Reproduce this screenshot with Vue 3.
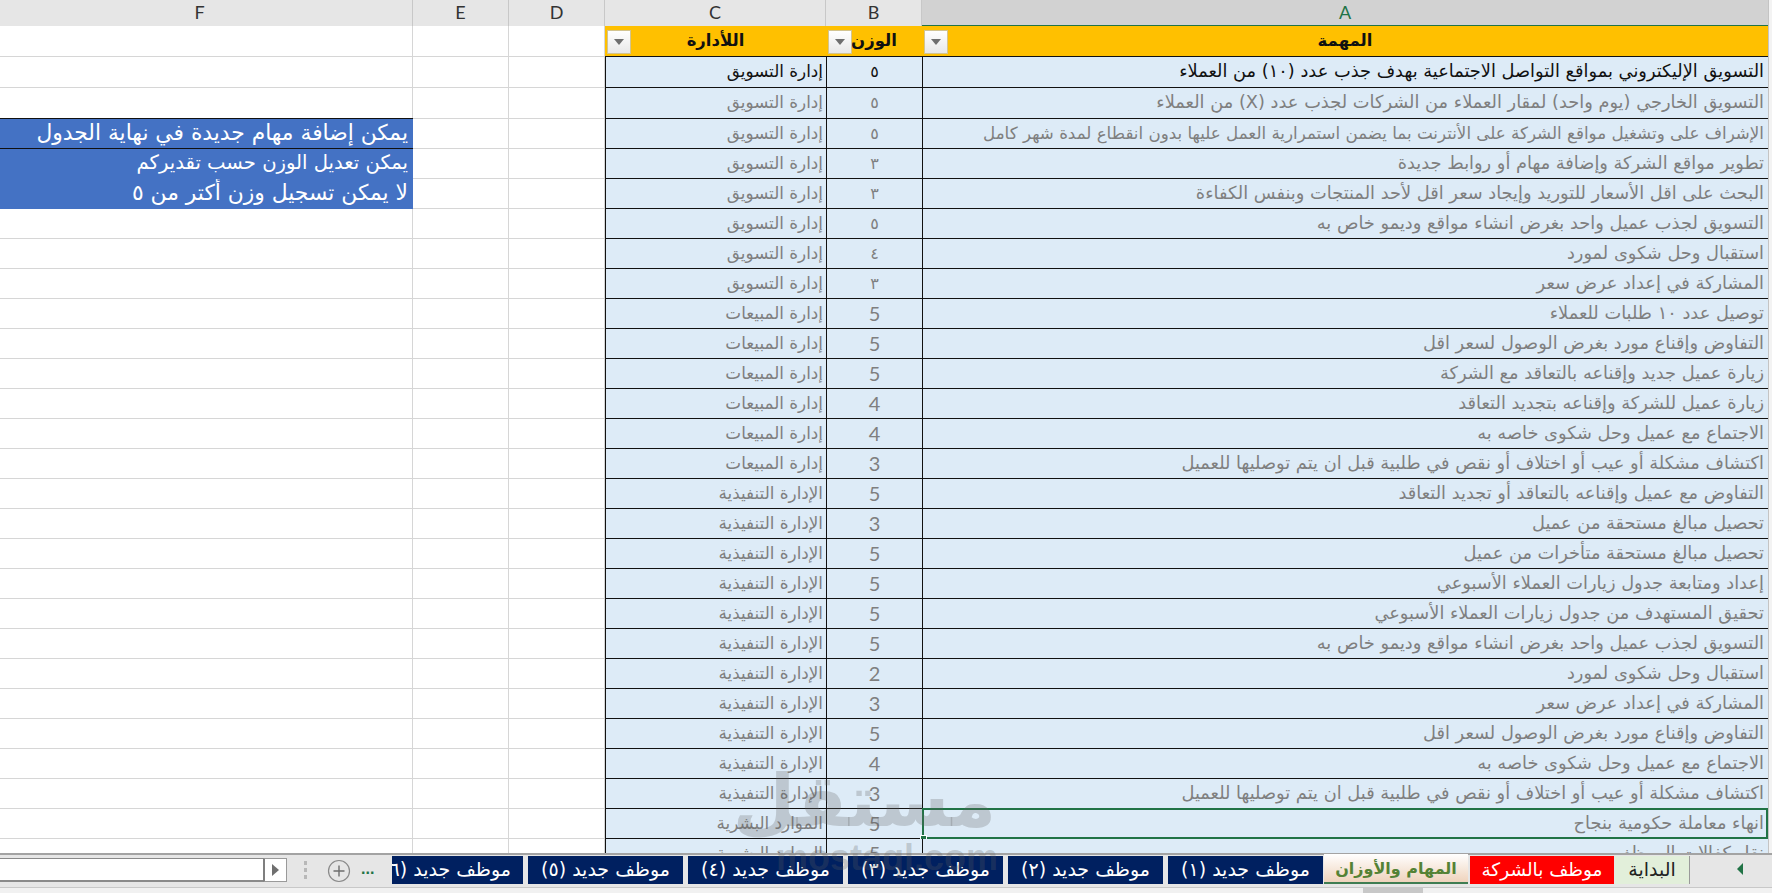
<script setup>
const mkt = 'إدارة التسويق'
const sales = 'إدارة المبيعات'
const exec = 'الإدارة التنفيذية'
const hr = 'الموارد البشرية'

const rows = [
  ['التسويق الإليكتروني بمواقع التواصل الاجتماعية بهدف جذب عدد (١٠) من العملاء', '٥', mkt],
  ['التسويق الخارجي (يوم واحد) لمقار العملاء من الشركات لجذب عدد (X) من العملاء', '٥', mkt],
  ['الإشراف على وتشغيل مواقع الشركة على الأنترنت بما يضمن استمرارية العمل عليها بدون انقطاع لمدة شهر كامل', '٥', mkt],
  ['تطوير مواقع الشركة وإضافة مهام أو روابط جديدة', '٣', mkt],
  ['البحث على اقل الأسعار للتوريد وإيجاد سعر اقل لأحد المنتجات وبنفس الكفاءة', '٣', mkt],
  ['التسويق لجذب عميل واحد بغرض انشاء مواقع وديمو خاص به', '٥', mkt],
  ['استقبال وحل شكوى لمورد', '٤', mkt],
  ['المشاركة في إعداد عرض سعر', '٣', mkt],
  ['توصيل عدد ١٠ طلبات للعملاء', '5', sales],
  ['التفاوض وإقناع مورد بغرض الوصول لسعر اقل', '5', sales],
  ['زيارة عميل جديد وإقناعه بالتعاقد مع الشركة', '5', sales],
  ['زيارة عميل للشركة وإقناعه بتجديد التعاقد', '4', sales],
  ['الاجتماع مع عميل وحل شكوى خاصه به', '4', sales],
  ['اكتشاف مشكلة أو عيب أو اختلاف أو نقص في طلبية قبل ان يتم توصليها للعميل', '3', sales],
  ['التفاوض مع عميل وإقناعه بالتعاقد أو تجديد التعاقد', '5', exec],
  ['تحصيل مبالغ مستحقة من عميل', '3', exec],
  ['تحصيل مبالغ مستحقة متأخرات من عميل', '5', exec],
  ['إعداد ومتابعة جدول زيارات العملاء الأسبوعي', '5', exec],
  ['تحقيق المستهدف من جدول زيارات العملاء الأسبوعي', '5', exec],
  ['التسويق لجذب عميل واحد بغرض انشاء مواقع وديمو خاص به', '5', exec],
  ['استقبال وحل شكوى لمورد', '2', exec],
  ['المشاركة في إعداد عرض سعر', '3', exec],
  ['التفاوض وإقناع مورد بغرض الوصول لسعر اقل', '5', exec],
  ['الاجتماع مع عميل وحل شكوى خاصه به', '4', exec],
  ['اكتشاف مشكلة أو عيب أو اختلاف أو نقص في طلبية قبل ان يتم توصليها للعميل', '3', exec],
  ['انهاء معاملة حكومية بنجاح', '5', hr],
  ['نقل كفالات الموظف', '5', hr]
]

// الملاحظات في العمود F
const notes = {
  2: 'يمكن إضافة مهام جديدة في نهاية الجدول',
  3: 'يمكن تعديل الوزن حسب تقديركم',
  4: 'لا يمكن تسجيل وزن أكتر من ٥'
}

const isArabicDigit = (d) => /[٠-٩]/.test(d)

const tabs = [
  { name: 'موظف جديد (٦)', cls: 'navy clipped' },
  { name: 'موظف جديد (٥)', cls: 'navy' },
  { name: 'موظف جديد (٤)', cls: 'navy' },
  { name: 'موظف جديد (٣)', cls: 'navy' },
  { name: 'موظف جديد (٢)', cls: 'navy' },
  { name: 'موظف جديد (١)', cls: 'navy' },
  { name: 'المهام والأوزان', cls: 'active' },
  { name: 'موظف بالشركة', cls: 'red' },
  { name: 'البداية', cls: 'start' }
]
</script>

<template>
  <div class="sheet">
    <div class="grid-area">
      <div class="row col-heads">
        <div class="head head-f">F</div>
        <div class="head">E</div>
        <div class="head">D</div>
        <div class="head">C</div>
        <div class="head">B</div>
        <div class="head selected">A</div>
        <div class="gutter"></div>
      </div>

      <div class="row title-row">
        <div class="plain"></div>
        <div class="plain"></div>
        <div class="plain"></div>
        <div class="title"><span class="filter"></span>اللأدارة</div>
        <div class="title"><span class="filter"></span>الوزن</div>
        <div class="title"><span class="filter"></span>المهمة</div>
        <div class="gutter"></div>
      </div>

      <div v-for="(r, i) in rows" :key="i" class="row data-row" :class="{ first: i === 0, tall: i < 2 }">
        <div class="plain" :class="{ note: notes[i], 'note-first': i === 2, 'note-tight': i === 3 }">{{ notes[i] }}</div>
        <div class="plain"></div>
        <div class="plain"></div>
        <div class="cell dept">{{ r[2] }}</div>
        <div class="cell weight" :class="{ 'ar-digit': isArabicDigit(r[1]) }">{{ r[1] }}</div>
        <div class="cell task" :class="{ 'long-text': i === 2 }">
          {{ r[0] }}
          <template v-if="i === 25">
            <span class="sel-box"></span>
            <span class="sel-handle"></span>
          </template>
        </div>
        <div class="gutter"></div>
      </div>
    </div>

    <div class="sheet-bar">
      <div class="hscroll">
        <div class="hscroll-track"></div>
        <div class="hscroll-btn"><span class="arrow-right"></span></div>
      </div>
      <div class="split"><i></i><i></i><i></i></div>
      <svg class="add" width="24" height="24" viewBox="0 0 24 24">
        <circle cx="12" cy="12" r="10.5" fill="none" stroke="#8a8a8a" stroke-width="1.2" />
        <path d="M12 6.5v11M6.5 12h11" stroke="#6e6e6e" stroke-width="1.4" />
      </svg>
      <div class="more">...</div>
      <div class="tabs">
        <div v-for="t in tabs" :key="t.name" class="tab" :class="t.cls">{{ t.name }}</div>
      </div>
      <div class="tab-nav"><span class="arrow-left"></span></div>
    </div>

    <div class="status">
      <div class="thumb"></div>
    </div>

    <div class="watermark">
      <div class="wm-ar">مستقل</div>
      <div class="wm-en">mostaql.com</div>
    </div>
  </div>
</template>

<style scoped>
.sheet {
  position: relative;
  width: 1772px;
  height: 893px;
  display: flex;
  flex-direction: column;
  overflow: hidden;
  background: #fff;
  font-family: "DejaVu Sans", "Noto Sans", sans-serif;
}

.grid-area {
  height: 853px;
  overflow: hidden;
}

.row {
  display: grid;
  grid-template-columns: 413px 96px 96px 221px 96px 846px 4px;
}

.col-heads {
  height: 26px;
}

.head {
  background: #e6e6e6;
  border-right: 1px solid #c8c8c8;
  border-bottom: 1px solid #9e9e9e;
  box-sizing: border-box;
  text-align: center;
  font-family: "Lato", sans-serif;
  font-size: 18px;
  line-height: 25px;
  color: #333;
}

.head-f {
  padding-right: 13px;
}

.head.selected {
  background: #d2d2d2;
  color: #217346;
  border-right: none;
  border-bottom: 2px solid #217346;
}

.gutter {
  background: #f3f3f3;
  border-left: 1px solid #c4c4c4;
  box-sizing: border-box;
}

.title-row {
  height: 31px;
}

.data-row {
  height: 30px;
}

.data-row.tall {
  height: 31px;
}

.plain {
  box-sizing: border-box;
  background: #fff;
  border-right: 1px solid #d6d6d6;
  border-bottom: 1px solid #d6d6d6;
}

.note {
  background: #4472c4;
  color: #fff;
  border-right: none;
  border-bottom: none;
  direction: rtl;
  padding-right: 5px;
  font-size: 21.8px;
  line-height: 28px;
  white-space: nowrap;
  overflow: hidden;
}

.note-tight {
  font-size: 19.6px;
}

.note-first {
  margin-top: -1px;
  border-top: 1px solid #111;
  border-bottom: 1px solid #111;
}

.title {
  position: relative;
  background: #ffc000;
  border-bottom: 1px solid #111;
  box-sizing: border-box;
  text-align: center;
  direction: rtl;
  font-size: 16.5px;
  font-weight: 700;
  line-height: 29px;
  color: #111;
}

.filter {
  position: absolute;
  left: 2px;
  top: 4px;
  width: 24px;
  height: 24px;
  box-sizing: border-box;
  border: 1px solid #d3c48f;
  background: linear-gradient(#ffffff, #e8e8e8);
}

.filter::after {
  content: "";
  position: absolute;
  left: 6px;
  top: 8px;
  border-left: 5px solid transparent;
  border-right: 5px solid transparent;
  border-top: 6px solid #6f6f6f;
}

.cell {
  position: relative;
  box-sizing: border-box;
  background: #ddebf7;
  border-bottom: 1px solid #111;
  border-left: 1px solid #111;
  direction: rtl;
  white-space: nowrap;
  color: #7f7f7f;
  font-size: 17.8px;
  line-height: 28px;
}

.first .cell {
  color: #111;
}

.dept {
  padding-right: 3px;
  font-size: 16.8px;
}

.weight {
  text-align: center;
  font-family: "Lato", "DejaVu Sans", sans-serif;
  font-size: 20px;
}

.weight.ar-digit {
  font-size: 16px;
}

.task {
  padding-right: 4px;
}

.task.long-text {
  font-size: 16.7px;
}

.sel-box {
  position: absolute;
  left: -1px;
  right: 0;
  top: -1px;
  bottom: -1px;
  border: 2px solid #217346;
  pointer-events: none;
}

.sel-handle {
  position: absolute;
  left: -3px;
  bottom: -4px;
  width: 7px;
  height: 7px;
  background: #217346;
  border: 1px solid #fff;
  box-sizing: border-box;
}

.sheet-bar {
  height: 35px;
  box-sizing: border-box;
  border-top: 2px solid #a3a3a3;
  border-bottom: 1px solid #c8c8c8;
  background: #e6e6e6;
  display: flex;
  align-items: flex-start;
}

.hscroll {
  width: 287px;
  height: 24px;
  margin-top: 3px;
  display: flex;
  flex: none;
}

.hscroll-track {
  flex: 1;
  background: #fff;
  border-top: 1px solid #8a8a8a;
  border-bottom: 2px solid #8a8a8a;
}

.hscroll-btn {
  width: 24px;
  box-sizing: border-box;
  background: #fff;
  border: 1px solid #9a9a9a;
  border-left: 2px solid #7f7f7f;
  display: flex;
  align-items: center;
  justify-content: center;
}

.arrow-right {
  border-top: 6px solid transparent;
  border-bottom: 6px solid transparent;
  border-left: 7px solid #6f6f6f;
}

.split {
  width: 36px;
  flex: none;
  display: flex;
  flex-direction: column;
  align-items: center;
  gap: 3px;
  margin-top: 6px;
}

.split i {
  width: 3px;
  height: 4px;
  background: #b8b8b8;
}

.add {
  flex: none;
  margin: 4px 0 0 4px;
}

.more {
  width: 31px;
  margin-left: 10px;
  flex: none;
  color: #217346;
  font-family: "Liberation Sans", sans-serif;
  font-size: 16px;
  font-weight: 700;
  line-height: 28px;
}

.tabs {
  display: flex;
  flex: none;
  align-items: flex-start;
}

.tab {
  box-sizing: border-box;
  width: 155px;
  height: 28px;
  margin-top: 1px;
  margin-right: 5px;
  direction: rtl;
  text-align: center;
  white-space: nowrap;
  overflow: hidden;
  font-size: 19px;
  line-height: 27px;
}

.navy {
  background: #002060;
  color: #fff;
}

.clipped {
  width: 131px;
  text-align: right;
  padding-right: 12px;
}

.active {
  width: 144px;
  height: 30px;
  margin-top: -1px;
  margin-right: 2px;
  margin-left: -4px;
  background: linear-gradient(#ffffff, #efd3bc);
  border-bottom: 2px solid #3f7d52;
  color: #548235;
  font-size: 16px;
  font-weight: 700;
  line-height: 30px;
}

.red {
  width: 144px;
  margin-right: 1px;
  background: #ff0000;
  color: #fff;
  font-size: 18.5px;
}

.start {
  width: 75px;
  margin-right: 0;
  background: #e2efda;
  border-right: 1px solid #9a9a9a;
  color: #222;
}

.tab-nav {
  margin-left: 47px;
  margin-top: 8px;
}

.arrow-left {
  display: block;
  border-top: 6px solid transparent;
  border-bottom: 6px solid transparent;
  border-right: 6px solid #217346;
}

.status {
  height: 5px;
  background: #f1f1f1;
  display: flex;
  padding-left: 1363px;
}

.thumb {
  width: 60px;
  background: #c8c8c8;
}

.watermark {
  position: absolute;
  left: 776px;
  top: 760px;
  width: 220px;
  text-align: center;
  color: rgba(95, 95, 95, 0.26);
  font-weight: 700;
  pointer-events: none;
}

.wm-ar {
  font-size: 72px;
  line-height: 82px;
  direction: rtl;
}

.wm-en {
  font-family: "Liberation Sans", sans-serif;
  font-size: 36px;
  line-height: 32px;
}
</style>
